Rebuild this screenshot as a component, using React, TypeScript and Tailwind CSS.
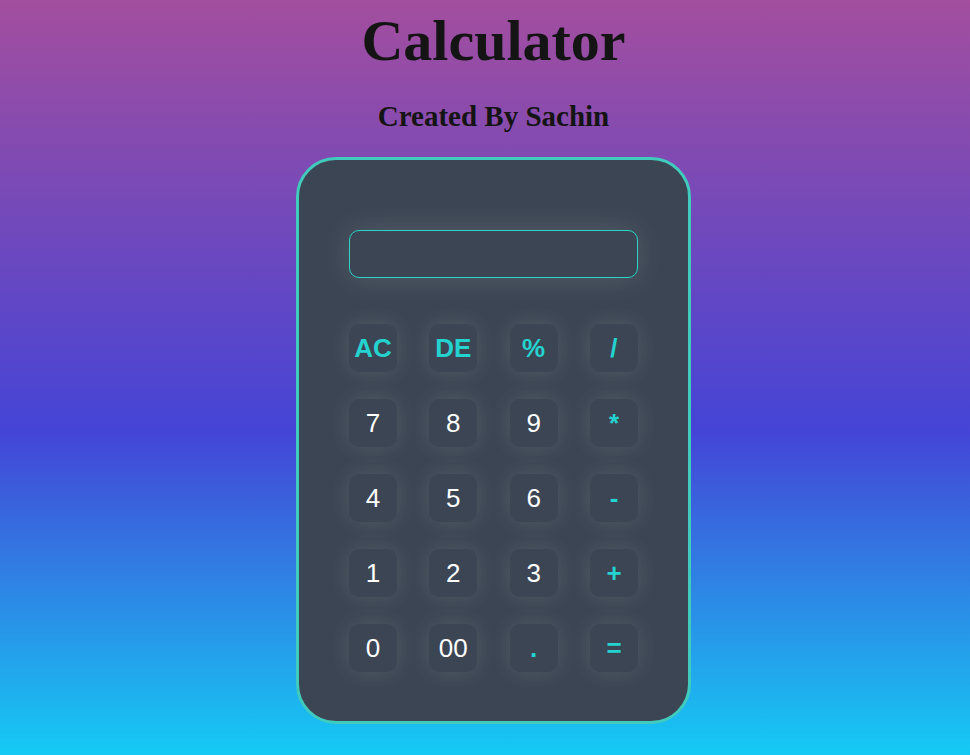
const keys = [
  { label: 'AC', accent: true },
  { label: 'DE', accent: true },
  { label: '%', accent: true },
  { label: '/', accent: true },
  { label: '7' },
  { label: '8' },
  { label: '9' },
  { label: '*', accent: true },
  { label: '4' },
  { label: '5' },
  { label: '6' },
  { label: '-', accent: true },
  { label: '1' },
  { label: '2' },
  { label: '3' },
  { label: '+', accent: true },
  { label: '0' },
  { label: '00' },
  { label: '.', accent: true },
  { label: '=', accent: true },
];

export default function App() {
  return (
    <div className="min-h-[755px] w-full pl-[17px] bg-[linear-gradient(to_bottom,#a34e9e,#4444d6_57%,#15caf4)] flex flex-col items-center font-['Liberation_Serif',serif] text-[#141414]">
      <h1 className="text-[58px] font-bold leading-none mt-[12px]">Calculator</h1>
      <h2 className="text-[29px] font-bold leading-none mt-[32px]">Created By Sachin</h2>

      <div className="mt-[26px] w-[395px] rounded-[40px] border-[3px] border-[#40cbbd] bg-[#3c4553] px-[50px] pt-[70px] pb-[49px]">
        <div className="h-[48px] w-full rounded-[10px] border border-[#2ad6c8] shadow-[0_0_30px_rgba(255,255,255,0.13)]"></div>

        <div className="mt-[46px] grid grid-cols-[repeat(4,48px)] justify-between gap-y-[27px]">
          {keys.map((k) => (
            <button
              key={k.label}
              className={`h-[48px] w-[48px] rounded-[10px] bg-[#3c4553] shadow-[0_0_22px_rgba(255,255,255,0.12)] flex items-center justify-center font-['Liberation_Sans',Arial,sans-serif] text-[26px] ${
                k.accent ? 'font-bold text-[#24d3d0]' : 'text-white'
              }`}
            >
              {k.label}
            </button>
          ))}
        </div>
      </div>
    </div>
  );
}
